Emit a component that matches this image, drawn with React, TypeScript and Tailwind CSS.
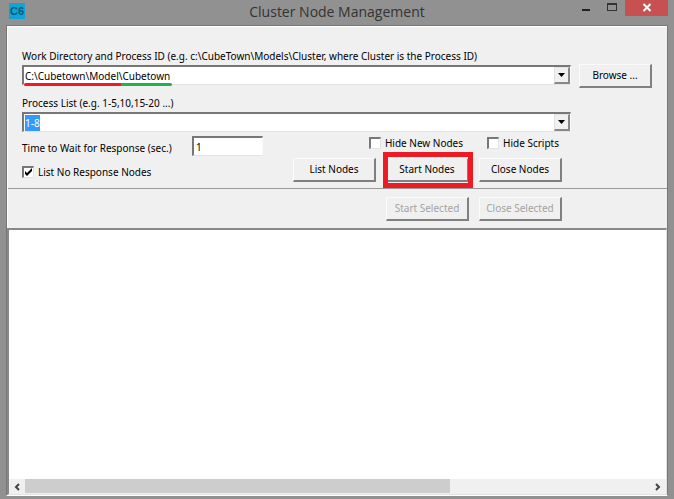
import React, { useEffect, useRef, useState } from "react";

type ComboProps = {
  id: string;
  label: string;
  value: string;
  onChange: (value: string) => void;
  inputRef?: React.Ref<HTMLInputElement>;
  children?: React.ReactNode;
};

const ComboField: React.FC<ComboProps> = ({ id, label, value, onChange, inputRef, children }) => (
  <div className="relative">
    <label htmlFor={id} className="block h-4 leading-4 whitespace-nowrap">
      {label}
    </label>
    <div className="flex h-5 mt-px bg-white border-t-2 border-l-2 border-r border-b border-t-[#777] border-l-[#777] border-r-[#f8f8f8] border-b-[#e3e3e3]">
      <input
        ref={inputRef}
        id={id}
        value={value}
        onChange={(e) => onChange(e.target.value)}
        className="flex-1 min-w-0 px-px leading-4 bg-white outline-none selection:bg-[#3399ff] selection:text-white"
      />
      <button
        type="button"
        aria-label={`Open ${label}`}
        className="w-4 flex items-center justify-center bg-[#f0f0f0] border border-t-[#e3e3e3] border-l-[#e3e3e3] border-r-2 border-b-2 border-r-[#888] border-b-[#888]"
      >
        <svg width="7" height="4" viewBox="0 0 7 4">
          <path d="M0 0h7L3.5 4z" fill="#000" />
        </svg>
      </button>
    </div>
    {children}
  </div>
);

type CheckProps = {
  label: string;
  checked: boolean;
  onChange: (checked: boolean) => void;
};

const CheckBox: React.FC<CheckProps> = ({ label, checked, onChange }) => (
  <label className="flex items-center gap-1 h-4 whitespace-nowrap">
    <span className="grid w-3 h-3">
      <input
        type="checkbox"
        checked={checked}
        onChange={(e) => onChange(e.target.checked)}
        className="appearance-none col-start-1 row-start-1 w-3 h-3 bg-white border-t-2 border-l-2 border-r border-b border-t-[#777] border-l-[#777] border-r-[#e3e3e3] border-b-[#e3e3e3]"
      />
      {checked && (
        <svg viewBox="0 0 12 12" className="col-start-1 row-start-1 w-3 h-3 pointer-events-none">
          <path d="M3 5v3l2 2 5-5V2L5 7z" fill="#000" />
        </svg>
      )}
    </span>
    {label}
  </label>
);

const PushButton: React.FC<React.ButtonHTMLAttributes<HTMLButtonElement>> = (props) => (
  <button
    type="button"
    {...props}
    className="w-full h-6 bg-[#f0f0f0] whitespace-nowrap border border-t-[#fbfbfb] border-l-[#fbfbfb] border-r-2 border-b-2 border-r-[#808080] border-b-[#808080] disabled:text-[#a3a3a3]"
  />
);

const App: React.FC = () => {
  const [directory, setDirectory] = useState("C:\\Cubetown\\Model\\Cubetown");
  const [processes, setProcesses] = useState("1-8");
  const [wait, setWait] = useState("1");
  const [listNoResponse, setListNoResponse] = useState(true);
  const [hideNodes, setHideNodes] = useState(false);
  const [hideScripts, setHideScripts] = useState(false);
  const processInput = useRef<HTMLInputElement>(null);

  useEffect(() => {
    processInput.current?.focus();
    processInput.current?.select();
  }, []);

  return (
    <div className="min-h-screen flex flex-col bg-[#919191] px-[6px] pb-[3px] text-[10px] text-black font-['Noto_Sans','DejaVu_Sans',sans-serif]">
      <header className="grid grid-cols-[1fr_auto_1fr] h-[25px] items-start">
        <div className="mt-[3px] ml-[3px] w-4 h-4 bg-[#0fa4d3] text-[#075a7d] text-[11px] leading-4 font-bold text-center font-['Liberation_Sans',sans-serif]">
          C6
        </div>
        <h1 className="text-[14px] leading-6 text-[#333] font-['Open_Sans',sans-serif]">Cluster Node Management</h1>
        <div className="flex justify-end">
          <button type="button" aria-label="Minimize" className="w-[26px] h-4 flex justify-center">
            <svg width="10" height="16" viewBox="0 0 10 16">
              <path d="M1 9h8v2H1z" fill="#222" />
            </svg>
          </button>
          <button type="button" aria-label="Maximize" className="w-[26px] h-4 flex justify-center">
            <svg width="10" height="16" viewBox="0 0 10 16">
              <path d="M0 3h10v8H0zM1 5v5h8V5z" fill="#333" fillRule="evenodd" />
            </svg>
          </button>
          <button type="button" aria-label="Close" className="w-[43px] h-4 flex justify-center bg-[#c75050]">
            <svg width="10" height="16" viewBox="0 0 10 16">
              <path d="M1.5 4l7 7M8.5 4l-7 7" stroke="#fff" strokeWidth="2" />
            </svg>
          </button>
        </div>
      </header>

      <main className="flex-1 flex flex-col bg-[#f0f0f0] border border-t-[#777] border-l-[#777] border-r-[#777] border-b-white">
        <form className="border-t border-l border-white pt-[21px]">
          <div className="flex gap-2 px-[14px]">
            <div className="flex-1 min-w-0">
              <ComboField
                id="directory"
                label="Work Directory and Process ID (e.g. c:\CubeTown\Models\Cluster, where Cluster is the Process ID)"
                value={directory}
                onChange={setDirectory}
              >
                <div className="absolute left-[2px] top-[35px] flex h-[3px] rounded-full overflow-hidden">
                  <span className="w-[97px] bg-[#ed1c24]" />
                  <span className="w-[51px] bg-[#22b14c]" />
                </div>
              </ComboField>
              <div className="mt-[10px]">
                <ComboField
                  id="processes"
                  label="Process List (e.g. 1-5,10,15-20 ...)"
                  value={processes}
                  onChange={setProcesses}
                  inputRef={processInput}
                />
              </div>
            </div>
            <div className="w-[73px] pt-4 mr-px">
              <PushButton>Browse ...</PushButton>
            </div>
          </div>

          <div className="flex justify-between pl-[14px] pr-[105px] pt-[3px] pb-[6px]">
            <div className="pt-px">
              <div className="flex items-start gap-4">
                <label htmlFor="wait" className="w-[154px] pt-1 leading-4 whitespace-nowrap">
                  Time to Wait for Response (sec.)
                </label>
                <input
                  id="wait"
                  value={wait}
                  onChange={(e) => setWait(e.target.value)}
                  className="w-[71px] h-5 px-[2px] bg-white outline-none border-t-2 border-l-2 border-r border-b border-t-[#777] border-l-[#777] border-r-[#f8f8f8] border-b-[#e3e3e3]"
                />
              </div>
              <div className="mt-2">
                <CheckBox label="List No Response Nodes" checked={listNoResponse} onChange={setListNoResponse} />
              </div>
            </div>
            <div>
              <div className="flex justify-end gap-6 pr-[3px]">
                <CheckBox label="Hide New Nodes" checked={hideNodes} onChange={setHideNodes} />
                <CheckBox label="Hide Scripts" checked={hideScripts} onChange={setHideScripts} />
              </div>
              <div className="mt-[7px] grid grid-cols-[83px_83px_83px] gap-[10px]">
                <PushButton>List Nodes</PushButton>
                <div className="relative">
                  <PushButton>Start Nodes</PushButton>
                  <div className="absolute -left-[3px] -right-[4px] -inset-y-[6px] border-[5px] border-[#ed1c24] pointer-events-none" />
                </div>
                <PushButton>Close Nodes</PushButton>
              </div>
            </div>
          </div>

          <div className="flex justify-end gap-[10px] pr-[105px] pt-2 pb-[7px] border-t border-[#999]">
            <div className="w-[83px]">
              <PushButton disabled>Start Selected</PushButton>
            </div>
            <div className="w-[83px]">
              <PushButton disabled>Close Selected</PushButton>
            </div>
          </div>
        </form>

        <section
          aria-label="Nodes"
          className="flex-1 flex flex-col justify-end bg-white border-t-2 border-l-2 border-r border-b border-t-[#888] border-l-[#888] border-r-[#e3e3e3] border-b-[#e3e3e3]"
        >
          <div className="flex h-[15px] bg-[#f0f0f0]">
            <button type="button" aria-label="Scroll left" className="w-4 flex items-center justify-center">
              <svg width="6" height="8" viewBox="0 0 6 8">
                <path d="M5 1L2 4l3 3" stroke="#444" strokeWidth="2" fill="none" />
              </svg>
            </button>
            <div className="flex-1">
              <div className="w-[68%] h-[14px] bg-[#cdcdcd]" />
            </div>
            <button type="button" aria-label="Scroll right" className="w-4 flex items-center justify-center">
              <svg width="6" height="8" viewBox="0 0 6 8">
                <path d="M1 1l3 3-3 3" stroke="#444" strokeWidth="2" fill="none" />
              </svg>
            </button>
          </div>
        </section>
      </main>
    </div>
  );
};

export default App;
